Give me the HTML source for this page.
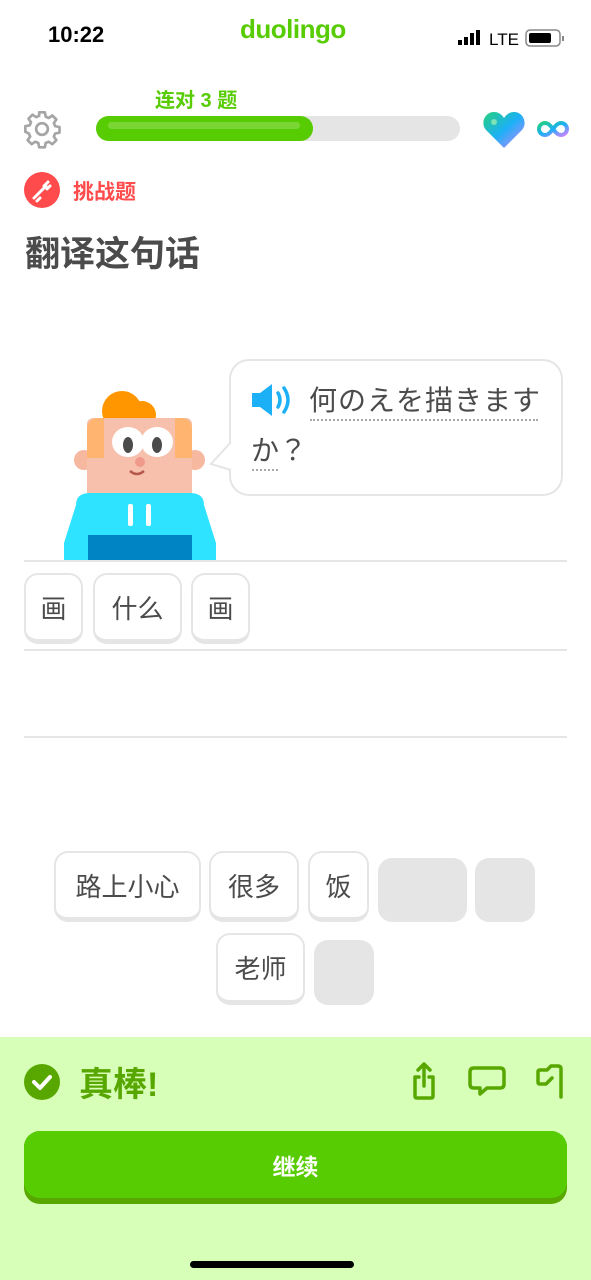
<!DOCTYPE html>
<html><head><meta charset="utf-8"><style>
*{margin:0;padding:0;box-sizing:border-box}
body{width:591px;height:1280px;position:relative;background:#fff;font-family:"Liberation Sans","Noto Sans CJK SC",sans-serif;overflow:hidden}
.a{position:absolute}
.tile{position:absolute;border:2px solid #e5e5e5;border-bottom-width:5px;border-radius:14px;background:#fff;font-size:26px;color:#4b4b4b;display:flex;align-items:center;justify-content:center}
.gray{position:absolute;background:#e5e5e5;border-radius:14px}
.hl{position:absolute;left:24px;width:543px;height:2px;background:#e5e5e5}
</style></head><body>
<div class="a" style="left:48px;top:22px;font-size:22px;font-weight:bold;color:#000">10:22</div>
<div class="a" style="left:240px;top:14px;font-size:26px;font-weight:bold;color:#58cc02;letter-spacing:-0.5px">duolingo</div>
<svg class="a" style="left:458px;top:29px" width="108" height="18" viewBox="0 0 108 18">
<rect x="0" y="11" width="4" height="5" fill="#000"/><rect x="6" y="8" width="4" height="8" fill="#000"/><rect x="12" y="4" width="4" height="12" fill="#000"/><rect x="18" y="1" width="4" height="15" fill="#000"/>
<text x="31" y="16" font-size="17" font-family="Liberation Sans" fill="#000">LTE</text>
<rect x="68" y="1" width="34" height="16" rx="4" fill="none" stroke="#888" stroke-width="1.5"/><rect x="71" y="4" width="22" height="10" rx="2" fill="#000"/><rect x="104" y="7" width="2" height="5" fill="#888"/>
</svg>
<div class="a" style="left:155px;top:84px;font-size:20px;font-weight:bold;color:#58cc02">连对 3 题</div>
<svg class="a" style="left:22px;top:109px" width="40" height="40" viewBox="0 0 24 24" fill="none" stroke="#a5a5a5" stroke-width="1.6" stroke-linejoin="round"><path d="M10.3 2h3.4l.5 2.6 1.8.8 2.2-1.5 2.4 2.4-1.5 2.2.8 1.8 2.6.5v3.4l-2.6.5-.8 1.8 1.5 2.2-2.4 2.4-2.2-1.5-1.8.8-.5 2.6h-3.4l-.5-2.6-1.8-.8-2.2 1.5-2.4-2.4 1.5-2.2-.8-1.8L2 13.7v-3.4l2.6-.5.8-1.8-1.5-2.2 2.4-2.4 2.2 1.5 1.8-.8z"/><circle cx="12" cy="12" r="3.5"/></svg>
<div class="a" style="left:96px;top:116px;width:364px;height:25px;border-radius:13px;background:#e5e5e5"></div>
<div class="a" style="left:96px;top:116px;width:217px;height:25px;border-radius:13px;background:#58cc02"></div>
<div class="a" style="left:108px;top:122px;width:192px;height:7px;border-radius:4px;background:#79d634"></div>
<svg class="a" style="left:482px;top:110px" width="44" height="40" viewBox="0 0 44 40"><defs><linearGradient id="g" x1="0" y1="0" x2="1" y2="1"><stop offset="0" stop-color="#26d07c"/><stop offset=".5" stop-color="#1cb0f6"/><stop offset="1" stop-color="#ce82ff"/></linearGradient></defs><path d="M22 38L4 20C-2 13 3 2 12 2c5 0 8 3 10 6 2-3 5-6 10-6 9 0 14 11 8 18z" fill="url(#g)"/><circle cx="12" cy="12" r="3" fill="#7be3b5"/></svg>
<svg class="a" style="left:537px;top:119px" width="32" height="20" viewBox="0 0 32 20"><path d="M16 10c-3-4-5-6-8-6a6 6 0 000 12c3 0 5-2 8-6s5-6 8-6a6 6 0 010 12c-3 0-5-2-8-6z" fill="none" stroke="url(#g)" stroke-width="4"/></svg>
<div class="a" style="left:24px;top:172px;width:36px;height:36px;border-radius:50%;background:#ff4b4b"></div>
<svg class="a" style="left:24px;top:172px" width="36" height="36" viewBox="0 0 36 36" stroke="#fff" stroke-width="3" stroke-linecap="round"><path d="M10 26l4-4M13 29l3-3M14 22l8-8M20 14l4-4M23 17l3-3"/></svg>
<div class="a" style="left:73px;top:176px;font-size:21px;font-weight:bold;color:#ff4b4b">挑战题</div>
<div class="a" style="left:25px;top:226px;font-size:35px;font-weight:bold;color:#4b4b4b">翻译这句话</div>
<svg class="a" style="left:62px;top:385px" width="160" height="177" viewBox="0 0 160 177">
<circle cx="60" cy="26" r="20" fill="#ff9600"/><circle cx="80" cy="30" r="14" fill="#ff9600"/>
<circle cx="22" cy="75" r="10" fill="#f7b8a0"/><circle cx="133" cy="75" r="10" fill="#f7b8a0"/>
<rect x="25" y="33" width="105" height="100" rx="6" fill="#f7c0ac"/>
<path d="M25 45q0-12 12-12h5v40h-17z" fill="#ffb570"/><path d="M130 45q0-12-12-12h-5v40h17z" fill="#ffb570"/>
<ellipse cx="66" cy="57" rx="16" ry="15" fill="#fff"/><ellipse cx="95" cy="57" rx="16" ry="15" fill="#fff"/>
<ellipse cx="66" cy="60" rx="5" ry="8" fill="#4b4b4b"/><ellipse cx="95" cy="60" rx="5" ry="8" fill="#4b4b4b"/>
<circle cx="78" cy="77" r="5" fill="#ef9a8a"/><path d="M68 86q7 6 14 0" stroke="#b5584a" stroke-width="2.5" fill="none"/>
<path d="M22 177l12-52h88l14 52z" fill="#f7c0ac"/>
<path d="M14 120q0-12 14-12h100q14 0 14 12l12 38v19H2v-19z" fill="#2ee3ff"/>
<rect x="26" y="150" width="104" height="27" fill="#0084c4"/>
<rect x="66" y="119" width="5" height="22" rx="2" fill="#fff"/><rect x="84" y="119" width="5" height="22" rx="2" fill="#fff"/>
</svg>
<div class="a" style="left:229px;top:359px;width:334px;height:137px;border:2px solid #e5e5e5;border-radius:20px;background:#fff"></div>
<svg class="a" style="left:207px;top:440px" width="26" height="32" viewBox="0 0 26 32"><path d="M24 2L4 24l20 6" fill="#fff" stroke="#e5e5e5" stroke-width="2"/></svg>
<svg class="a" style="left:250px;top:382px" width="44" height="36" viewBox="0 0 44 36"><path d="M2 11h8l12-9v32l-12-9H2z" fill="#1cb0f6"/><path d="M28 11q4 7 0 14M34 6q8 12 0 24" stroke="#1cb0f6" stroke-width="3.5" fill="none" stroke-linecap="round"/></svg>
<div class="a" style="left:309px;top:381px;font-size:28px;color:#4b4b4b;line-height:36px;letter-spacing:1px;font-family:'Noto Sans CJK JP',sans-serif">何のえを描きます</div>
<div class="a" style="left:310px;top:419px;width:228px;border-top:2px dotted #aaa"></div>
<div class="a" style="left:251px;top:431px;font-size:28px;color:#4b4b4b;line-height:36px;font-family:'Noto Sans CJK JP',sans-serif">か？</div>
<div class="a" style="left:252px;top:469px;width:26px;border-top:2px dotted #aaa"></div>
<div class="hl" style="top:560px"></div>
<div class="hl" style="top:649px"></div>
<div class="hl" style="top:736px"></div>
<div class="tile" style="left:24px;top:573px;width:59px;height:71px">画</div>
<div class="tile" style="left:93px;top:573px;width:89px;height:71px">什么</div>
<div class="tile" style="left:191px;top:573px;width:59px;height:71px">画</div>
<div class="tile" style="left:54px;top:851px;width:147px;height:71px">路上小心</div>
<div class="tile" style="left:209px;top:851px;width:90px;height:71px">很多</div>
<div class="tile" style="left:308px;top:851px;width:61px;height:71px">饭</div>
<div class="gray" style="left:378px;top:858px;width:89px;height:64px"></div>
<div class="gray" style="left:475px;top:858px;width:60px;height:64px"></div>
<div class="tile" style="left:216px;top:933px;width:89px;height:72px">老师</div>
<div class="gray" style="left:314px;top:940px;width:60px;height:65px"></div>
<div class="a" style="left:0;top:1037px;width:591px;height:243px;background:#d7ffb8"></div>
<svg class="a" style="left:24px;top:1064px" width="36" height="36" viewBox="0 0 36 36"><circle cx="18" cy="18" r="18" fill="#58a700"/><path d="M10 18l6 6 10-11" stroke="#fff" stroke-width="4" fill="none" stroke-linecap="round" stroke-linejoin="round"/></svg>
<div class="a" style="left:79px;top:1057px;font-size:34px;font-weight:bold;color:#58a700">真棒!</div>
<svg class="a" style="left:408px;top:1060px" width="160" height="42" viewBox="0 0 160 42" fill="none" stroke="#58a700" stroke-width="3.5" stroke-linecap="round" stroke-linejoin="round">
<path d="M11 17H7v19q0 2 2 2h14q2 0 2-2V17h-4M16 26V4M10 10l6-6 6 6"/>
<path d="M66 8h26q4 0 4 4v12q0 4-4 4H79l-7 6v-6h-6q-4 0-4-4V12q0-4 4-4z"/>
<path d="M153 37V9q0-3-3-3h-7l-4 4h-7q-2 0-2 2v10q0 2 2 2h6l6-6"/>
</svg>
<div class="a" style="left:24px;top:1131px;width:543px;height:73px;border-radius:16px;background:#58a700"></div>
<div class="a" style="left:24px;top:1131px;width:543px;height:67px;border-radius:16px;background:#58cc02;display:flex;align-items:center;justify-content:center;color:#fff;font-size:23px;font-weight:bold">继续</div>
<div class="a" style="left:190px;top:1261px;width:164px;height:7px;border-radius:4px;background:#000"></div>
</body></html>
